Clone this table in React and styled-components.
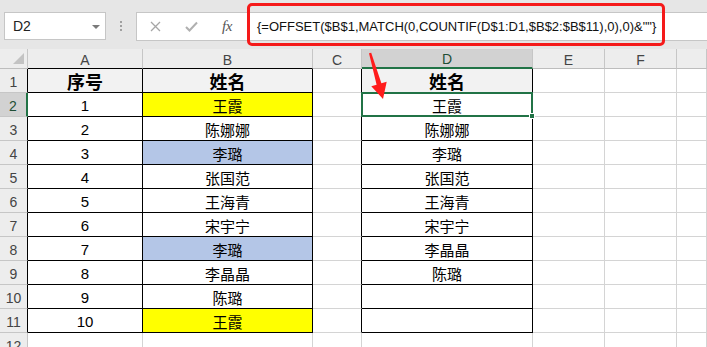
import React from 'react';
import styled, { createGlobalStyle } from 'styled-components';

const Global = createGlobalStyle`
  html, body { margin: 0; padding: 0; background: #fff; }
  body { font-family: "Liberation Sans", "Noto Sans CJK SC", sans-serif; overflow: hidden; }
  * { box-sizing: border-box; }
`;

const GREEN = '#217346';
const GRID = '#d4d4d4';
const HDR_LINE = '#c6c6c6';

const Page = styled.div`
  position: relative;
  width: 707px;
  height: 347px;
  overflow: hidden;
  background: #fff;
  display: flex;
  flex-direction: column;
`;

const Toolbar = styled.div`
  height: 49px;
  flex: none;
  background: #e6e6e6;
  display: flex;
  align-items: flex-start;
  padding: 12px 0 0 4px;
`;

const NameBox = styled.div`
  width: 102px;
  height: 28px;
  background: #fff;
  border: 1px solid #c6c6c6;
  display: flex;
  align-items: center;
  justify-content: space-between;
  padding: 0 5px 0 8px;
  font-size: 14px;
  color: #222;
`;

const Caret = styled.span`
  width: 0;
  height: 0;
  border-left: 4px solid transparent;
  border-right: 4px solid transparent;
  border-top: 4px solid #7a7a7a;
  margin-top: 1px;
`;

const Grip = styled.div`
  width: 30px;
  height: 28px;
  display: flex;
  flex-direction: column;
  align-items: center;
  justify-content: center;
  gap: 2px;
`;

const Dot = styled.span`
  width: 2px;
  height: 2px;
  background: #a0a0a0;
`;

const FormulaBar = styled.div`
  flex: 1;
  height: 29px;
  background: #fff;
  border: 1px solid #c6c6c6;
  border-right: none;
  display: flex;
  align-items: center;
`;

const IconBtn = styled.div`
  width: 36px;
  height: 100%;
  display: flex;
  align-items: center;
  justify-content: center;
  color: ${p => p.$color || '#9a9a9a'};
`;

const Fx = styled.span`
  font-family: "Liberation Serif", serif;
  font-style: italic;
  font-size: 15px;
  color: #555;
  letter-spacing: -0.5px;
`;

const FormulaText = styled.div`
  padding-left: 12px;
  font-family: "Liberation Sans", sans-serif;
  font-size: 13px;
  color: #111;
  white-space: nowrap;
`;

const Sheet = styled.div`
  display: grid;
  grid-template-columns: 28px 115px 170px 49px 171px 72px 72px 1fr;
  grid-template-rows: 20px repeat(12, 24px);
`;

const ColHead = styled.div`
  background: ${p => (p.$active ? '#d2d2d2' : '#ededed')};
  border-right: 1px solid ${HDR_LINE};
  border-bottom: ${p => (p.$active ? `2px solid ${GREEN}` : `1px solid ${p.$bottom || '#bdbdbd'}`)};
  display: flex;
  align-items: center;
  justify-content: center;
  padding-top: 2px;
  font-size: 14px;
  color: ${p => (p.$active ? '#1f4e35' : '#444')};
`;

const Corner = styled(ColHead)`
  position: relative;
  justify-content: flex-end;
  align-items: flex-end;
  padding: 0 3px 4px 0;
`;

const Tri = styled.span`
  width: 0;
  height: 0;
  border-left: 11px solid transparent;
  border-bottom: 11px solid #c3c3c3;
`;

const RowHead = styled.div`
  background: ${p => (p.$active ? '#d2d2d2' : '#ededed')};
  border-bottom: 1px solid ${HDR_LINE};
  border-right: ${p => (p.$active ? `2px solid ${GREEN}` : `1px solid ${p.$right || HDR_LINE}`)};
  display: flex;
  align-items: center;
  justify-content: center;
  padding-top: 3px;
  font-size: 14px;
  color: ${p => (p.$active ? '#1f4e35' : '#444')};
`;

const Cell = styled.div`
  position: relative;
  background: ${p => p.$fill || '#fff'};
  border-right: 1px solid ${p => p.$right || GRID};
  border-bottom: 1px solid ${p => p.$bottom || GRID};
  display: flex;
  align-items: center;
  justify-content: center;
  padding-top: ${p => (p.$head ? '1px' : '2px')};
  font-family: "Liberation Sans", "Noto Sans CJK SC", sans-serif;
  font-size: ${p => (p.$head ? '18px' : '15px')};
  font-weight: ${p => (p.$head ? 700 : 400)};
  color: #000;
  white-space: nowrap;
`;

const Selection = styled.div`
  position: absolute;
  inset: -1px;
  border: 2px solid ${GREEN};
  z-index: 3;
  pointer-events: none;
`;

const Handle = styled.span`
  position: absolute;
  right: -4px;
  bottom: -4px;
  width: 6px;
  height: 6px;
  background: ${GREEN};
  border: 1px solid #fff;
`;

const RedFrame = styled.div`
  position: absolute;
  left: 247px;
  top: 3px;
  width: 418px;
  height: 43px;
  border: 3px solid #f51a1a;
  border-radius: 5px;
  z-index: 5;
  pointer-events: none;
`;

const Overlay = styled.svg`
  position: absolute;
  left: 0;
  top: 0;
  z-index: 6;
  pointer-events: none;
`;

const HEAD_FILL = '#f2f2f2';
const BLUE = '#b4c6e7';
const YELLOW = '#ffff00';

const rows = [
  { n: 1, a: '序号', b: '姓名', d: '姓名', head: true },
  { n: 2, a: '1', b: '王霞', bFill: YELLOW, d: '王霞', sel: true },
  { n: 3, a: '2', b: '陈娜娜', d: '陈娜娜' },
  { n: 4, a: '3', b: '李璐', bFill: BLUE, d: '李璐' },
  { n: 5, a: '4', b: '张国范', d: '张国范' },
  { n: 6, a: '5', b: '王海青', d: '王海青' },
  { n: 7, a: '6', b: '宋宇宁', d: '宋宇宁' },
  { n: 8, a: '7', b: '李璐', bFill: BLUE, d: '李晶晶' },
  { n: 9, a: '8', b: '李晶晶', d: '陈璐' },
  { n: 10, a: '9', b: '陈璐', d: '' },
  { n: 11, a: '10', b: '王霞', bFill: YELLOW, d: '' },
  { n: 12, empty: true },
];

const cols = ['A', 'B', 'C', 'D', 'E', 'F', ''];

export default function App() {
  return (
    <Page>
      <Global />
      <Toolbar>
        <NameBox>
          <span>D2</span>
          <Caret />
        </NameBox>
        <Grip>
          <Dot />
          <Dot />
          <Dot />
        </Grip>
        <FormulaBar>
          <IconBtn>
            <svg width="11" height="11" viewBox="0 0 11 11">
              <path d="M1 1 L10 10 M10 1 L1 10" stroke="#a6a6a6" strokeWidth="1.3" fill="none" />
            </svg>
          </IconBtn>
          <IconBtn>
            <svg width="13" height="11" viewBox="0 0 13 11">
              <path d="M1 6 L4.5 9.5 L12 1.5" stroke="#b0b0b0" strokeWidth="2" fill="none" />
            </svg>
          </IconBtn>
          <IconBtn>
            <Fx>fx</Fx>
          </IconBtn>
          <FormulaText>{'{=OFFSET($B$1,MATCH(0,COUNTIF(D$1:D1,$B$2:$B$11),0),0)&""}'}</FormulaText>
        </FormulaBar>
      </Toolbar>

      <Sheet>
        <Corner>
          <Tri />
        </Corner>
        {cols.map((c, i) => (
          <ColHead
            key={'h' + i}
            $active={c === 'D'}
            $bottom={c === 'A' || c === 'B' ? '#000' : undefined}
          >
            {c}
          </ColHead>
        ))}
        {rows.map(r => {
          const inTable = !r.empty;
          const blk = inTable ? '#000' : undefined;
          return (
            <React.Fragment key={r.n}>
              <RowHead $active={r.sel} $right={blk}>{r.n}</RowHead>
              <Cell $head={r.head} $fill={r.head ? HEAD_FILL : undefined} $right={blk} $bottom={blk}>
                {r.a}
              </Cell>
              <Cell $head={r.head} $fill={r.head ? HEAD_FILL : r.bFill} $right={blk} $bottom={blk}>
                {r.b}
              </Cell>
              <Cell $right={blk} />
              <Cell $head={r.head} $fill={r.head ? HEAD_FILL : undefined} $right={blk} $bottom={blk}>
                {r.d}
                {r.sel && (
                  <Selection>
                    <Handle />
                  </Selection>
                )}
              </Cell>
              <Cell />
              <Cell />
              <Cell />
            </React.Fragment>
          );
        })}
      </Sheet>

      <RedFrame />
      <Overlay width="707" height="347" viewBox="0 0 707 347">
        <polygon
          points="369,53.3 371.2,52.7 381.4,83.3 386.7,81.8 383,99 371.3,86.2 376.6,84.7"
          fill="#ff1c1c"
        />
      </Overlay>
    </Page>
  );
}
